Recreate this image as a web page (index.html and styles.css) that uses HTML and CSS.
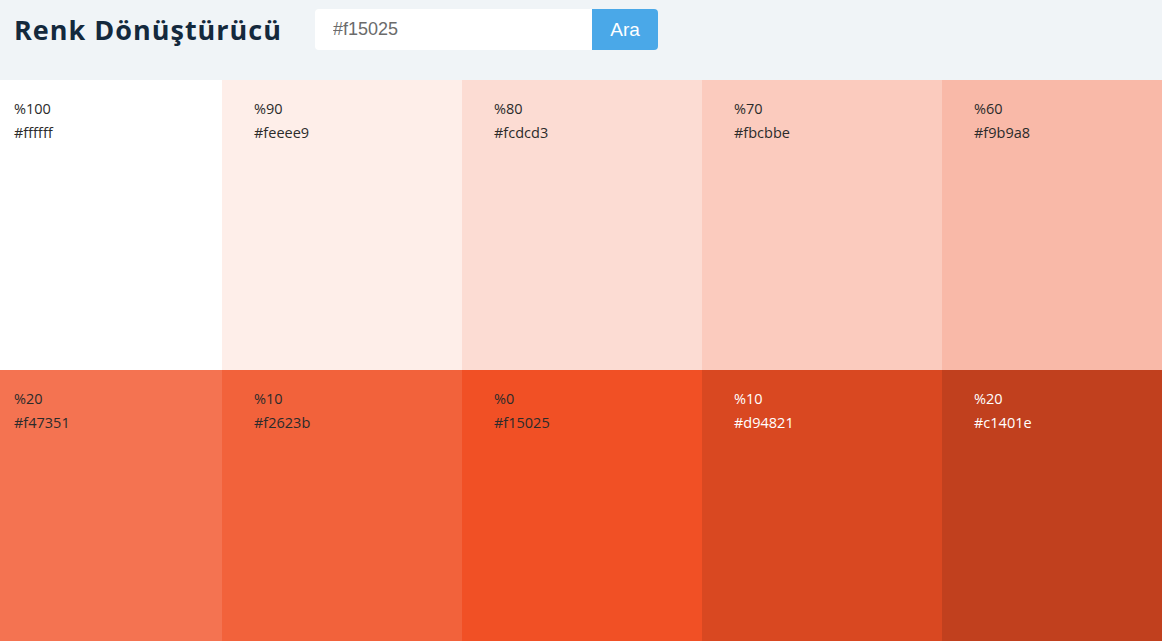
FILE: index.html
```html
<!DOCTYPE html>
<html lang="tr">
<head>
<meta charset="utf-8">
<title>Renk Dönüştürücü</title>
<link rel="stylesheet" href="styles.css">
</head>
<body>
<header class="header">
  <div class="header-inner">
    <h1 class="title">Renk Dönüştürücü</h1>
    <form class="search">
      <input class="search-input" type="text" value="#f15025">
      <button class="search-btn" type="button">Ara</button>
    </form>
  </div>
</header>
<main class="palette">
  <div class="swatch" style="background:#ffffff"><span>%100</span><span>#ffffff</span></div>
  <div class="swatch" style="background:#feeee9"><span>%90</span><span>#feeee9</span></div>
  <div class="swatch" style="background:#fcdcd3"><span>%80</span><span>#fcdcd3</span></div>
  <div class="swatch" style="background:#fbcbbe"><span>%70</span><span>#fbcbbe</span></div>
  <div class="swatch" style="background:#f9b9a8"><span>%60</span><span>#f9b9a8</span></div>
  <div class="swatch" style="background:#f47351"><span>%20</span><span>#f47351</span></div>
  <div class="swatch" style="background:#f2623b"><span>%10</span><span>#f2623b</span></div>
  <div class="swatch" style="background:#f15025"><span>%0</span><span>#f15025</span></div>
  <div class="swatch swatch-dark" style="background:#d94821"><span>%10</span><span>#d94821</span></div>
  <div class="swatch swatch-dark" style="background:#c1401e"><span>%20</span><span>#c1401e</span></div>
</main>
</body>
</html>
```
FILE: styles.css
```css
* { box-sizing: border-box; }
html, body { margin: 0; padding: 0; }
body {
  font-family: "Open Sans", "Noto Sans", sans-serif;
  overflow: hidden;
  background: #ffffff;
}
.header {
  background: #f0f4f7;
  height: 80px;
  display: grid;
  grid-template-columns: 1200px;
  justify-content: center;
  padding-left: 2px;
}
.header-inner {
  display: flex;
  align-items: flex-start;
  padding: 9px 32px 0 32px;
  gap: 33px;
}
.title {
  margin: 0;
  font-size: 27px;
  line-height: 41px;
  font-weight: 700;
  letter-spacing: 1px;
  color: #14293d;
}
.search {
  display: flex;
  margin: 0;
}
.search-input {
  width: 277px;
  height: 41px;
  border: none;
  border-radius: 4px 0 0 4px;
  background: #ffffff;
  padding: 0 18px;
  font-family: "Liberation Sans", Arial, sans-serif;
  font-size: 18px;
  color: #6b6b6b;
  outline: none;
}
.search-btn {
  width: 66px;
  height: 41px;
  border: none;
  border-radius: 0 4px 4px 0;
  background: #4aa8e8;
  color: #ffffff;
  font-family: "Liberation Sans", Arial, sans-serif;
  font-size: 19px;
  padding: 0;
}
.palette {
  display: grid;
  grid-template-columns: repeat(5, 240px);
  grid-auto-rows: 290px;
  justify-content: center;
  padding-left: 2px;
}
.swatch {
  display: flex;
  flex-direction: column;
  padding: 17px 32px 0 32px;
  font-size: 14.5px;
  line-height: 24px;
  color: #2b2b2b;
}
.swatch-dark { color: #ffffff; }
```
